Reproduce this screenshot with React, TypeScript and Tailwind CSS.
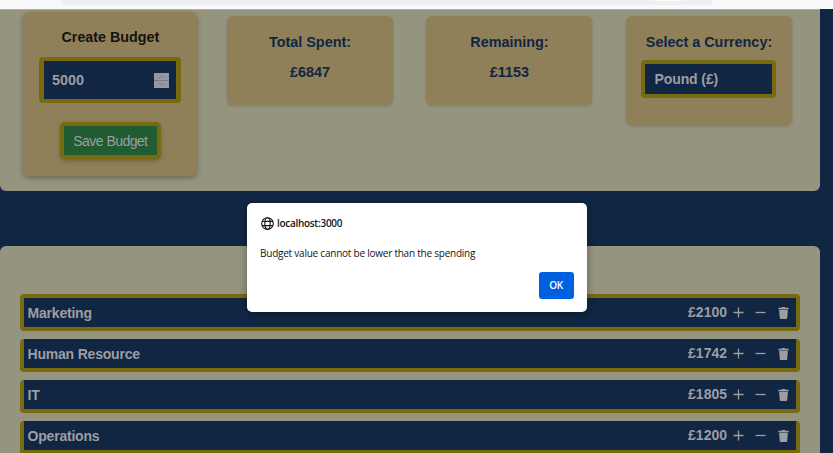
import type { ReactNode } from "react";

const expenses = [
  { name: "Marketing", amount: "£2100" },
  { name: "Human Resource", amount: "£1742" },
  { name: "IT", amount: "£1805" },
  { name: "Operations", amount: "£1200" },
];

function BrowserBar() {
  return (
    <div className="h-[9px] shrink-0 bg-[#f9f9fb] pl-[62px]">
      <div className="h-[5px] w-[650px] rounded-b-[2px] bg-[#f0eff4] pl-[592px]">
        <div className="h-px w-[28px] rounded-b-sm bg-white" />
      </div>
    </div>
  );
}

function Card({ className, children }: { className: string; children: ReactNode }) {
  return (
    <section
      className={`flex shrink-0 flex-col items-center rounded-[6px] bg-[#8f8059] text-[#102642] ${className}`}
    >
      {children}
    </section>
  );
}

function Stat({ label, value }: { label: string; value: string }) {
  return (
    <Card className="mt-[4px] h-[89px] w-[166px] pt-[17px] shadow-[0_1px_3px_rgba(0,0,0,0.18)]">
      <h2 className="h-[30px] text-[14.4px] leading-[18px]">{label}</h2>
      <p className="text-[14.4px] leading-[18px]">{value}</p>
    </Card>
  );
}

function ExpenseRow({ name, amount, first }: { name: string; amount: string; first: boolean }) {
  return (
    <li
      className={`flex shrink-0 items-center justify-between rounded-[4px] border-[#776a11] bg-[#102642] pr-[7px] pl-[3.5px] text-[14px] text-[#9d9da4] ${
        first ? "h-[37px] border-4" : "h-[33px] border-x-4 border-b-4"
      }`}
    >
      <span className="pt-px tracking-[-0.2px]">{name}</span>
      <span className="flex items-center">
        <span className="mr-[6px] mb-px">{amount}</span>
        <svg className="mr-[11px] size-[11px]" viewBox="0 0 11 11" stroke="currentColor" strokeWidth="1.3">
          <path d="M.5 5.5h10M5.5.5v10" />
        </svg>
        <svg className="mr-[12px] size-[11px]" viewBox="0 0 11 11" stroke="currentColor" strokeWidth="1.3">
          <path d="M.5 5.5h10" />
        </svg>
        <svg className="h-[12px] w-[11px]" viewBox="0 0 11 12" fill="currentColor">
          <path d="M.3.8h3L4 0h3l.7.8h3v1.4H.3zM1.1 2.8h8.8l-.7 8.5q-.1.7-.8.7H2.6q-.7 0-.8-.7z" />
        </svg>
      </span>
    </li>
  );
}

function AlertDialog() {
  return (
    <div
      role="alertdialog"
      className="absolute top-[203px] left-[247px] flex h-[109px] w-[340px] flex-col rounded-[5px] bg-white px-[13px] pt-[13px] font-['Open_Sans','Noto_Sans',sans-serif] text-[#15141a] shadow-[0_2px_8px_rgba(0,0,0,0.35)]"
    >
      <div className="flex h-[15px] items-center pl-px">
        <svg className="mr-[3px] size-[13px]" viewBox="0 0 13 13" fill="none" stroke="currentColor" strokeWidth="1.1">
          <circle cx="6.5" cy="6.5" r="5.8" />
          <ellipse cx="6.5" cy="6.5" rx="2.7" ry="5.8" />
          <path d="M1 4.4h11M1 8.6h11" />
        </svg>
        <span className="text-[10px] font-semibold tracking-[-0.3px]">localhost:3000</span>
      </div>
      <p className="mt-[14px] h-[16px] text-[10px] leading-[16px] font-normal tracking-[-0.23px] whitespace-nowrap">
        Budget value cannot be lower than the spending
      </p>
      <button className="mt-[11px] mr-[0.5px] h-[27px] w-[35px] self-end rounded-[3px] bg-[#0061e0] text-[10px] font-semibold tracking-[-0.3px] text-[#fbfbfe]">
        OK
      </button>
    </div>
  );
}

export default function App() {
  return (
    <div className="relative flex h-[453px] w-[833px] flex-col overflow-hidden bg-[#102642] font-['Liberation_Sans',Arial,sans-serif] font-bold">
      <BrowserBar />
      <main className="flex w-[820px] flex-col">
        <div className="flex h-[182px] shrink-0 items-start rounded-b-[6px] border-t border-[#b0b0a0] bg-[#95947f] pt-[2px] pl-[23.4px]">
          <Card className="mr-[29.6px] h-[164px] w-[174px] pt-[16px] shadow-[0_2px_5px_rgba(0,0,0,0.3)]">
            <h2 className="text-[14.3px] leading-[18px] text-[#15130f]">Create Budget</h2>
            <div className="mt-[11px] flex h-[46px] w-[142px] items-center justify-between rounded-[4px] border-x-[5px] border-y-4 border-[#776a11] bg-[#102642] pr-[7px] pl-[7.5px] text-[14.4px] text-[#9d9da4]">
              <span className="pt-px">5000</span>
              <svg className="h-[15px] w-[15px]" viewBox="0 0 15 15" fill="none">
                <path fill="#9697a0" d="M0 0h15v15H0z" />
                <path stroke="#777985" d="M0 7.5h15M5 5.2l2.5-2.4L10 5.2M5 9.8l2.5 2.4L10 9.8" />
              </svg>
            </div>
            <button className="mt-[19px] h-[37px] w-[101px] rounded-[5px] border-4 border-[#776a11] bg-[#215b31] pt-px text-[14px] font-normal tracking-[-0.55px] whitespace-nowrap text-[#9d9da4] shadow-[0_2px_4px_rgba(0,0,0,0.25)]">
              Save Budget
            </button>
          </Card>
          <div className="flex items-start gap-[33.5px]">
            <Stat label="Total Spent:" value="£6847" />
            <Stat label="Remaining:" value="£1153" />
            <Card className="mt-[4px] h-[109px] w-[166px] pt-[17px] shadow-[0_1px_3px_rgba(0,0,0,0.18)]">
              <h2 className="text-[14.4px] leading-[18px]">Select a Currency:</h2>
              <div className="mt-[9px] flex h-[38px] w-[135px] items-center rounded-[4px] border-4 border-[#776a11] bg-[#102642] pl-[9px] text-[14px] tracking-[-0.1px] text-[#9d9da4]">
                Pound (£)
              </div>
            </Card>
          </div>
        </div>
        <div className="mt-[55px] h-[207px] shrink-0 rounded-t-[6px] bg-[#95947f] pt-[48px] pl-[20px]">
          <ul className="flex w-[780px] flex-col gap-[8px]">
            {expenses.map((e, i) => (
              <ExpenseRow key={e.name} name={e.name} amount={e.amount} first={i === 0} />
            ))}
          </ul>
        </div>
      </main>
      <AlertDialog />
    </div>
  );
}
